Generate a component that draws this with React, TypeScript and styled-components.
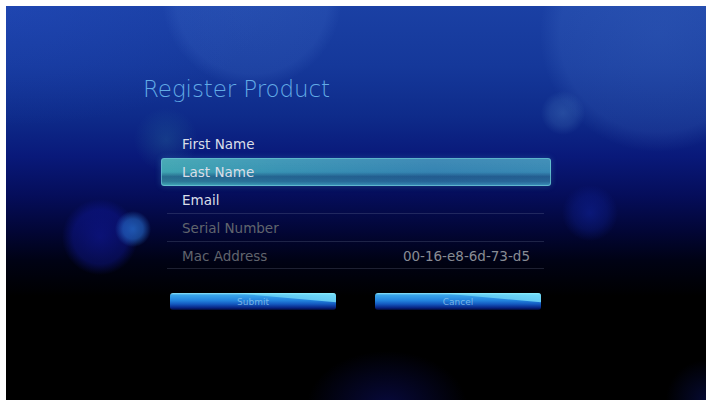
import React from "react";
import styled, { createGlobalStyle } from "styled-components";

const GlobalStyle = createGlobalStyle`
  html, body {
    margin: 0;
    background: #fff;
  }
  body {
    padding: 6px 0 0 6px;
    font-family: "DejaVu Sans", "Liberation Sans", sans-serif;
  }
`;

const Screen = styled.main`
  width: 700px;
  height: 394px;
  overflow: hidden;
  box-sizing: border-box;
  padding-top: 69px;
  display: flex;
  flex-direction: column;
  background:
    radial-gradient(circle 90px at 246px -8px, rgba(95, 145, 230, 0.17) 0, rgba(95, 145, 230, 0.13) 76px, rgba(95, 145, 230, 0) 90px),
    radial-gradient(circle 118px at 652px 28px, rgba(95, 145, 225, 0.2) 0, rgba(95, 145, 225, 0.14) 98px, rgba(95, 145, 225, 0) 118px),
    radial-gradient(circle 22px at 557px 107px, rgba(110, 175, 225, 0.24) 0, rgba(110, 175, 225, 0.14) 13px, rgba(110, 175, 225, 0) 22px),
    radial-gradient(circle 32px at 160px 134px, rgba(60, 165, 175, 0.2) 0, rgba(60, 165, 175, 0) 32px),
    radial-gradient(circle 18px at 127px 223px, rgba(35, 100, 195, 0.85) 0, rgba(35, 100, 195, 0.65) 10px, rgba(35, 100, 195, 0) 18px),
    radial-gradient(circle 38px at 94px 231px, rgba(18, 28, 175, 0.55) 0, rgba(18, 28, 175, 0.38) 27px, rgba(18, 28, 175, 0) 38px),
    radial-gradient(circle 28px at 584px 207px, rgba(16, 36, 160, 0.55) 0, rgba(16, 36, 160, 0.3) 17px, rgba(16, 36, 160, 0) 28px),
    radial-gradient(ellipse 80px 55px at 381px 400px, rgba(14, 18, 120, 0.5) 0, rgba(14, 18, 120, 0) 80px),
    radial-gradient(circle 40px at 700px 394px, rgba(12, 22, 110, 0.45) 0, rgba(12, 22, 110, 0) 40px),
    radial-gradient(ellipse 260px 120px at 0 0, rgba(40, 80, 200, 0.35) 0, rgba(40, 80, 200, 0) 260px),
    linear-gradient(
      to bottom,
      #1a40a4 0,
      #15389a 60px,
      #0e2b8a 110px,
      #09197a 150px,
      #050d5a 190px,
      #020636 225px,
      #000214 255px,
      #000 290px
    );
`;

const Title = styled.h1`
  margin: 0 0 0 137px;
  font-size: 23px;
  line-height: 28px;
  font-weight: 200;
  color: #62abe6;
  letter-spacing: -0.1px;
`;

const Form = styled.section`
  width: 390px;
  margin: 27.5px 0 0 155px;
  display: flex;
  flex-direction: column;
`;

const Row = styled.div<{ $active?: boolean; $line?: boolean }>`
  position: relative;
  height: 27.8px;
  box-sizing: border-box;
  display: flex;
  align-items: center;
  justify-content: space-between;
  padding: 0 21px;
  font-size: 13.5px;
  ${(p) =>
    p.$line &&
    `&::after {
      content: "";
      position: absolute;
      left: 6px;
      right: 7px;
      bottom: 0;
      height: 1px;
      background: rgba(150, 160, 190, 0.2);
    }`}
  ${(p) =>
    p.$active &&
    `
    padding-left: 20px;
    border-radius: 3px;
    border: 1px solid rgba(110, 200, 215, 0.7);
    background:
      linear-gradient(to bottom, rgba(255,255,255,0.06) 0, rgba(255,255,255,0) 50%, rgba(10, 40, 100, 0.45) 68%, rgba(10, 40, 100, 0.35) 86%, rgba(255,255,255,0) 100%),
      linear-gradient(to right, #3fa5b2 0, #3893b4 30%, #3584b2 70%, #3889b4 100%);
    box-shadow: 0 0 6px rgba(70, 170, 200, 0.3);
  `}
`;

const Label = styled.span<{ $tone: "on" | "off" }>`
  color: ${(p) => (p.$tone === "on" ? "#d9dee8" : "#60646d")};
`;

const Value = styled.span`
  color: #888c94;
`;

const Buttons = styled.div`
  display: flex;
  gap: 39px;
  margin: 23.5px 0 0 9px;
`;

const Button = styled.button`
  position: relative;
  width: 166px;
  height: 17px;
  padding: 2px 0 0;
  border: none;
  border-radius: 3px;
  overflow: hidden;
  font-family: "DejaVu Sans", "Liberation Sans", sans-serif;
  font-size: 9px;
  line-height: 13px;
  color: rgba(150, 205, 240, 0.75);
  background: linear-gradient(
    to bottom,
    #8fe6fa 0,
    #3aa6ea 12%,
    #2282dc 45%,
    #1459c0 65%,
    #07207e 88%,
    #020a30 100%
  );
  &::after {
    content: "";
    position: absolute;
    inset: 0;
    clip-path: polygon(38% 0, 100% 0, 100% 55%);
    background: linear-gradient(to right, rgba(140, 245, 255, 0.25), rgba(140, 245, 255, 0.65));
  }
`;

const rows = [
  { label: "First Name", tone: "on" as const },
  { label: "Last Name", tone: "on" as const, active: true },
  { label: "Email", tone: "on" as const, line: true },
  { label: "Serial Number", tone: "off" as const, line: true },
  { label: "Mac Address", tone: "off" as const, line: true, value: "00-16-e8-6d-73-d5" },
];

export default function App() {
  return (
    <>
      <GlobalStyle />
      <Screen>
        <Title>Register Product</Title>
        <Form>
          {rows.map((r) => (
            <Row key={r.label} $active={r.active} $line={r.line}>
              <Label $tone={r.tone}>{r.label}</Label>
              {r.value && <Value>{r.value}</Value>}
            </Row>
          ))}
          <Buttons>
            <Button>Submit</Button>
            <Button>Cancel</Button>
          </Buttons>
        </Form>
      </Screen>
    </>
  );
}
